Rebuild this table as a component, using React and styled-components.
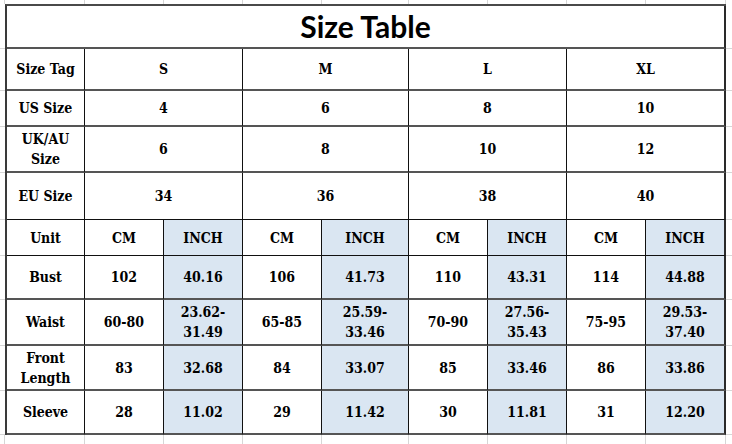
import React from 'react';
import styled, { createGlobalStyle } from 'styled-components';

const GlobalStyle = createGlobalStyle`
  html, body {
    margin: 0;
    padding: 0;
    background: #ffffff;
  }
  * {
    box-sizing: border-box;
  }
`;

const COLS = [80, 79, 79, 79, 87, 79, 79, 79, 80];
const ROWS = [45, 42, 36, 46, 47, 36, 44, 46, 45, 44];

const Sheet = styled.div`
  width: 732px;
  height: 444px;
  display: grid;
  grid-template-columns: 5px ${COLS.map((c) => `${c}px`).join(' ')} 1fr;
  grid-template-rows: 4px ${ROWS.map((r) => `${r}px`).join(' ')} 1fr;
  background: #ffffff;
  overflow: hidden;
`;

const Gutter = styled.div`
  border-right: ${(p) => (p.$right ? '1px solid #d6d6d6' : 'none')};
  border-bottom: ${(p) => (p.$bottom ? '1px solid #d6d6d6' : 'none')};
`;

const Table = styled.div`
  grid-column: 2 / 11;
  grid-row: 2 / 12;
  display: grid;
  grid-template-columns: 78px 79px 79px 79px 87px 79px 79px 79px 80px;
  grid-template-rows: 43px 42px 36px 46px 47px 36px 44px 46px 45px 44px;
  border-left: 2px solid #3a3a3a;
  border-top: 2px solid #4a4a4a;
  font-family: 'DejaVu Serif Condensed', 'DejaVu Serif', 'Liberation Serif', serif;
  font-weight: bold;
  font-size: 14px;
  color: #000;
`;

const Cell = styled.div`
  grid-column: span ${(p) => p.$span || 1};
  display: flex;
  align-items: center;
  justify-content: center;
  text-align: center;
  line-height: 20px;
  background: ${(p) => (p.$blue ? '#dae6f2' : '#ffffff')};
  border-right: ${(p) => (p.$last ? '2px solid #2a2a2a' : '1px solid #111')};
  border-bottom: ${(p) => (p.$thin ? '1px solid #111' : '2px solid #555')};
  white-space: pre-line;
`;

const Title = styled(Cell)`
  font-family: Lato, 'Liberation Sans', sans-serif;
  font-size: 30px;
  font-weight: 700;
  padding-bottom: 2px;
`;

const groups = [
  { label: 'Size Tag', values: ['S', 'M', 'L', 'XL'] },
  { label: 'US Size', values: ['4', '6', '8', '10'] },
  { label: 'UK/AU\nSize', values: ['6', '8', '10', '12'] },
  { label: 'EU Size', values: ['34', '36', '38', '40'], thin: true },
];

const measures = [
  { label: 'Unit', values: ['CM', 'INCH', 'CM', 'INCH', 'CM', 'INCH', 'CM', 'INCH'], thin: true },
  { label: 'Bust', values: ['102', '40.16', '106', '41.73', '110', '43.31', '114', '44.88'] },
  {
    label: 'Waist',
    values: ['60-80', '23.62-\n31.49', '65-85', '25.59-\n33.46', '70-90', '27.56-\n35.43', '75-95', '29.53-\n37.40'],
  },
  { label: 'Front\nLength', values: ['83', '32.68', '84', '33.07', '85', '33.46', '86', '33.86'] },
  { label: 'Sleeve', values: ['28', '11.02', '29', '11.42', '30', '11.81', '31', '12.20'] },
];

const widths = ['5px', ...COLS.map((c) => `${c}px`), '1fr'];

const App = () => (
  <>
    <GlobalStyle />
    <Sheet>
      {widths.map((w, i) => (
        <Gutter key={`t${i}`} $right={i < widths.length - 1} />
      ))}
      {ROWS.map((r, i) => (
        <React.Fragment key={`side${i}`}>
          <Gutter style={{ gridColumn: 1, gridRow: i + 2 }} $bottom />
          <Gutter style={{ gridColumn: 11, gridRow: i + 2 }} $bottom />
        </React.Fragment>
      ))}
      <Table>
        <Title $span={9} $last>Size Table</Title>
        {groups.map((g) => (
          <React.Fragment key={g.label}>
            <Cell $thin={g.thin}>{g.label}</Cell>
            {g.values.map((v, i) => (
              <Cell key={i} $span={2} $last={i === 3} $thin={g.thin}>
                {v}
              </Cell>
            ))}
          </React.Fragment>
        ))}
        {measures.map((m) => (
          <React.Fragment key={m.label}>
            <Cell $thin={m.thin}>{m.label}</Cell>
            {m.values.map((v, i) => (
              <Cell key={i} $blue={i % 2 === 1} $last={i === 7} $thin={m.thin}>
                {v}
              </Cell>
            ))}
          </React.Fragment>
        ))}
      </Table>
      {widths.map((w, i) => (
        <Gutter key={`b${i}`} $right={i < widths.length - 1} style={{ gridRow: 12, gridColumn: i + 1 }} />
      ))}
    </Sheet>
  </>
);

export default App;
